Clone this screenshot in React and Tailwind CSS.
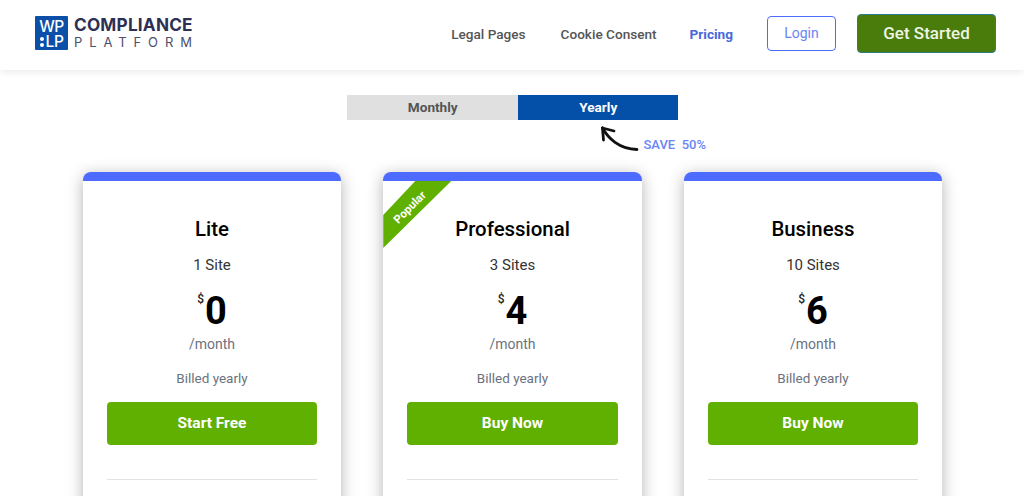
const plans = [
  { name: "Lite", sites: "1 Site", price: "0", cta: "Start Free" },
  { name: "Professional", sites: "3 Sites", price: "4", cta: "Buy Now", popular: true },
  { name: "Business", sites: "10 Sites", price: "6", cta: "Buy Now" },
];

function Logo() {
  return (
    <div className="flex items-center gap-[6px] -mt-[4px]">
      <div className="w-[33px] h-[34px] pt-[2px] bg-[#0b4fa8] rounded-[1px] flex flex-col items-center justify-center text-white font-['Inter',sans-serif] font-medium text-[15.5px] leading-[15px] tracking-[-0.4px]">
        <span>WP</span>
        <span className="flex items-center gap-[2px]">
          <span className="flex flex-col gap-[2px]">
            <span className="w-[4px] h-[4px] rounded-full bg-white"></span>
            <span className="w-[4px] h-[4px] rounded-full bg-white"></span>
          </span>
          LP
        </span>
      </div>
      <div className="font-['Inter',sans-serif] text-[#2d3054]">
        <div className="text-[17.2px] leading-[18px] font-bold tracking-[0.2px]">COMPLIANCE</div>
        <div className="text-[13px] leading-[16px] font-normal tracking-[6.9px] text-[#4b4f6b] whitespace-nowrap">PLATFORM</div>
      </div>
    </div>
  );
}

function Header() {
  return (
    <header className="h-[70px] bg-white shadow-[0_1px_8px_rgba(0,0,0,0.1)] flex items-center pl-[35px] pr-[28px] relative">
      <Logo />
      <nav className="ml-auto flex items-center text-[13.6px] font-medium text-[#555]">
        <a className="mr-[35px] -mt-[1px]">Legal Pages</a>
        <a className="mr-[33px] -mt-[1px]">Cookie Consent</a>
        <a className="mr-[34px] text-[#4a68dc] font-bold -mt-[1px]">Pricing</a>
        <button className="w-[69px] h-[35px] border border-[#4d6bfe] rounded-[4px] text-[#6a85f5] text-[14px] font-normal mr-[21px] -mt-[3px]">Login</button>
        <button className="w-[139px] h-[39px] bg-[#4a7c0b] border border-[#2e7a8a] rounded-[4px] text-[#eef5e4] text-[17px] font-medium -mt-[3px]">Get Started</button>
      </nav>
    </header>
  );
}

function BillingToggle() {
  return (
    <div className="flex flex-col items-center pt-[25px]">
      <div className="flex w-[331px] h-[25px] text-[13.6px] font-bold">
        <div className="w-[171.5px] pl-[1px] bg-[#e0e0e0] text-[#555] flex items-center justify-center">Monthly</div>
        <div className="w-[159.5px] pl-[1px] bg-[#0450a8] text-white flex items-center justify-center">Yearly</div>
      </div>
      <div className="w-[331px] h-[52px] flex items-start pl-[253px] pt-[5px]">
        <svg width="40" height="28" viewBox="0 0 40 28" fill="none" className="shrink-0">
          <path d="M2.5 3C8 13 19 24 37 24.5" stroke="#111" strokeWidth="2.8" strokeLinecap="round" />
          <path d="M2.5 3L3.5 15M2.5 3L14 6" stroke="#111" strokeWidth="2.8" strokeLinecap="round" />
        </svg>
        <span className="ml-[4px] mt-[13px] text-[13px] leading-[14px] font-medium text-[#6a85f5] whitespace-pre">SAVE  50%</span>
      </div>
    </div>
  );
}

function PlanCard({ plan }) {
  return (
    <div className="relative w-[258.5px] h-[400px] bg-white rounded-t-[8px] border-t-[9px] border-[#4d6bfe] shadow-[0_3px_16px_rgba(0,0,0,0.3)] px-[24px] pt-[35px] text-center shrink-0">
      {plan.popular && (
        <div className="absolute left-0 top-0 w-[68px] h-[67px] bg-[#5fb000] [clip-path:polygon(32px_0,68px_0,0_67px,0_34px)] flex items-center justify-center">
          <span className="text-white text-[11.5px] font-bold -rotate-45 -translate-x-[7px] -translate-y-[7px]">Popular</span>
        </div>
      )}
      <h3 className="text-[20.4px] leading-[26px] font-medium text-black">{plan.name}</h3>
      <p className="mt-[14px] text-[15px] leading-[18px] text-[#333]">{plan.sites}</p>
      <div className="mt-[17px] h-[40px] flex justify-center items-start text-black">
        <span className="text-[12px] leading-[14px] mt-[1px] mr-[1px] font-medium text-[#222]">$</span>
        <span className="text-[38px] leading-[40px] font-bold">{plan.price}</span>
      </div>
      <p className="mt-[4px] text-[14px] leading-[18px] text-[#6b7280]">/month</p>
      <p className="mt-[16px] text-[13.5px] leading-[18px] text-[#6b7280]">Billed yearly</p>
      <button className="mt-[15px] w-full h-[43px] bg-[#5fb000] rounded-[4px] text-white text-[15.5px] font-bold">{plan.cta}</button>
      <div className="mt-[34px] border-t border-[#e2e2e2]"></div>
    </div>
  );
}

export default function App() {
  return (
    <div className="h-[496px] overflow-hidden bg-white font-['Roboto',sans-serif]">
      <Header />
      <BillingToggle />
      <div className="flex justify-center gap-[42px] pl-[1px]">
        {plans.map((plan) => (
          <PlanCard key={plan.name} plan={plan} />
        ))}
      </div>
    </div>
  );
}
